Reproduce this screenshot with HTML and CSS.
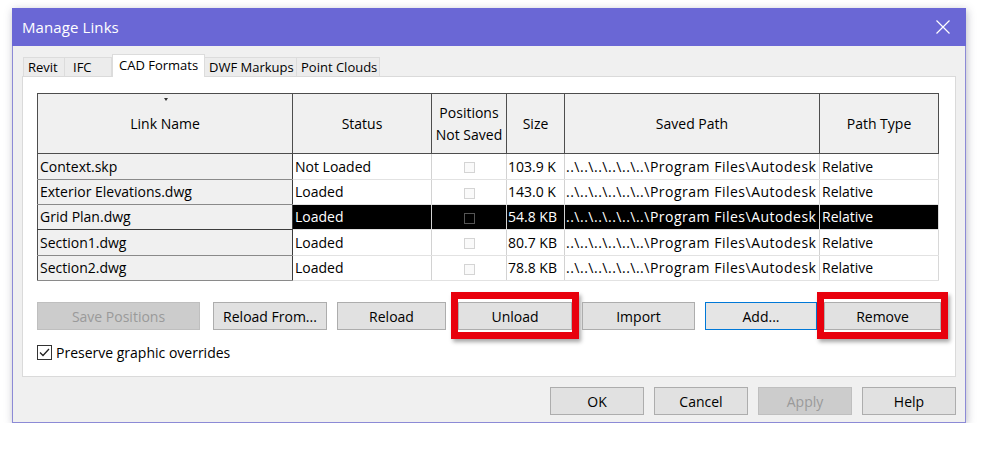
FILE: index.html
```html
<!DOCTYPE html>
<html>
<head>
<meta charset="utf-8">
<title>Manage Links</title>
<link rel="stylesheet" href="styles.css">
</head>
<body>
<div class="window">
  <div class="titlebar">
    <span class="title">Manage Links</span>
    <span class="close">
      <svg width="14" height="14" viewBox="0 0 14 14"><path d="M0.5 0.5 L13.5 13.5 M13.5 0.5 L0.5 13.5" stroke="#fff" stroke-width="1.2" fill="none"/></svg>
    </span>
  </div>
  <div class="content">
    <div class="tabs">
      <div class="tab tab-revit">Revit</div>
      <div class="tab tab-ifc">IFC</div>
      <div class="tab tab-active">CAD Formats</div>
      <div class="tab tab-dwf">DWF Markups</div>
      <div class="tab tab-pc">Point Clouds</div>
    </div>
    <div class="panel">
      <table class="grid">
        <colgroup>
          <col class="c-name"><col class="c-status"><col class="c-pos"><col class="c-size"><col class="c-path"><col class="c-type">
        </colgroup>
        <thead>
          <tr>
            <th class="h-name"><span class="sort"></span>Link Name</th>
            <th>Status</th>
            <th>Positions<br>Not Saved</th>
            <th>Size</th>
            <th>Saved Path</th>
            <th>Path Type</th>
          </tr>
        </thead>
        <tbody>
          <tr class="r1">
            <td class="name">Context.skp</td><td>Not Loaded</td><td class="pos"><span class="cb"></span></td><td class="size">103.9 K</td><td class="path">..\..\..\..\..\..\Program Files\Autodesk</td><td class="type">Relative</td>
          </tr>
          <tr class="r2">
            <td class="name">Exterior Elevations.dwg</td><td>Loaded</td><td class="pos"><span class="cb"></span></td><td class="size">143.0 K</td><td class="path">..\..\..\..\..\..\Program Files\Autodesk</td><td class="type">Relative</td>
          </tr>
          <tr class="r3 selected">
            <td class="name">Grid Plan.dwg</td><td>Loaded</td><td class="pos"><span class="cb"></span></td><td class="size">54.8 KB</td><td class="path">..\..\..\..\..\..\Program Files\Autodesk</td><td class="type">Relative</td>
          </tr>
          <tr class="r4">
            <td class="name">Section1.dwg</td><td>Loaded</td><td class="pos"><span class="cb"></span></td><td class="size">80.7 KB</td><td class="path">..\..\..\..\..\..\Program Files\Autodesk</td><td class="type">Relative</td>
          </tr>
          <tr class="r5">
            <td class="name">Section2.dwg</td><td>Loaded</td><td class="pos"><span class="cb"></span></td><td class="size">78.8 KB</td><td class="path">..\..\..\..\..\..\Program Files\Autodesk</td><td class="type">Relative</td>
          </tr>
        </tbody>
      </table>
      <div class="actions">
        <button class="btn disabled b-save">Save Positions</button>
        <button class="btn b-rf">Reload From...</button>
        <button class="btn b-reload">Reload</button>
        <button class="btn marked b-unload">Unload</button>
        <button class="btn b-import">Import</button>
        <button class="btn focused b-add">Add...</button>
        <button class="btn marked b-remove">Remove</button>
      </div>
      <label class="check">
        <span class="checkbox">
          <svg width="13" height="13" viewBox="0 0 13 13"><path d="M2 6.5 L5 9.5 L11 3" stroke="#222" stroke-width="1.3" fill="none"/></svg>
        </span>
        <span>Preserve graphic overrides</span>
      </label>
    </div>
    <div class="footer">
      <button class="btn fbtn">OK</button>
      <button class="btn fbtn">Cancel</button>
      <button class="btn fbtn disabled">Apply</button>
      <button class="btn fbtn">Help</button>
    </div>
  </div>
</div>
</body>
</html>
```
FILE: styles.css
```css
html, body {
  margin: 0;
  padding: 0;
  background: #ffffff;
}
body {
  font-family: "Open Sans", "Noto Sans", "DejaVu Sans", sans-serif;
  font-size: 14px;
  color: #000;
  padding-top: 8px;
}
.window {
  margin-left: 12px;
  width: 954px;
  box-sizing: border-box;
  border: 1px solid #8c8ad6;
  border-top: none;
  background: #f0f0f0;
  box-shadow: 1px 2px 8px rgba(60, 60, 90, 0.35);
}
.titlebar {
  height: 38px;
  background: #6a67d5;
  color: #fff;
  display: flex;
  align-items: center;
  justify-content: space-between;
  padding-left: 10px;
  margin: 0 -1px;
}
.title {
  font-size: 15px;
  letter-spacing: 0.1px;
}
.close {
  width: 46px;
  height: 38px;
  display: flex;
  align-items: center;
  justify-content: center;
}
.content {
  padding: 9px 9px 7px 9px;
}
.tabs {
  display: flex;
  align-items: flex-end;
  height: 21px;
  padding-left: 1px;
  position: relative;
  z-index: 1;
}
.tab {
  height: 19px;
  line-height: 18px;
  box-sizing: border-box;
  background: #ececec;
  border: 1px solid #dcdcdc;
  border-bottom: none;
  padding: 0 4px;
  font-size: 13px;
  white-space: nowrap;
}
.tab-revit { width: 42px; }
.tab-ifc { width: 47px; padding-left: 8px; border-left: none; }
.tab-active {
  width: 93px;
  line-height: 20px;
  background: #fff;
  padding-left: 6px;
  margin-bottom: -1px;
  height: 23px;
}
.tab-dwf { width: 92px; border-left: none; }
.tab-pc { width: 83px; border-left: none; }
.panel {
  height: 301px;
  box-sizing: border-box;
  background: #fff;
  border: 1px solid #dadada;
  padding: 16px 0 0 14px;
}
.grid {
  width: 901px;
  table-layout: fixed;
  border-collapse: collapse;
  font-size: 14px;
}
.c-name { width: 255px; }
.c-status { width: 139px; }
.c-pos { width: 75px; }
.c-size { width: 58px; }
.c-path { width: 255px; }
.c-type { width: 119px; }
.grid th {
  height: 59px;
  background: #f0f0f0;
  border: 1px solid #4d4d4d;
  font-weight: normal;
  line-height: 22px;
  padding: 0 1px;
  text-align: center;
  vertical-align: middle;
}
.h-name {
  position: relative;
}
.sort {
  position: absolute;
  left: 126px;
  top: 4px;
  width: 0;
  height: 0;
  border-left: 2.5px solid transparent;
  border-right: 2.5px solid transparent;
  border-top: 3px solid #333;
}
.grid td {
  height: 24px;
  padding: 0 0 0 2px;
  white-space: nowrap;
  overflow: hidden;
  border-right: 1px solid #d2d2d2;
  border-bottom: 1px solid #e2e2e2;
  line-height: 24px;
}
.grid tr.r1 td, .grid tr.r4 td { height: 25px; }
.grid td.name {
  background: #f0f0f0;
  border: 1px solid #8a8a8a;
  border-right: 1px solid #3c3c3c;
  border-left: 1px solid #4d4d4d;
}
.grid td.pos { text-align: center; padding: 0; }
.grid td.size { border-left: 1px solid #b4b4b4; padding-left: 1px; }
.grid td.path { padding-left: 1px; letter-spacing: 0.5px; }
.grid td.type { border-left: 1px solid #8a8a8a; padding-left: 2px; border-right: 1px solid #d8d8d8; }
.cb {
  display: inline-block;
  width: 9px;
  height: 9px;
  border: 1px solid #d4d4d4;
  background: #fafafa;
  vertical-align: middle;
}
.grid tr.selected td {
  background: #000;
  color: #fff;
}
.grid tr.selected td.name {
  background: #f0f0f0;
  color: #000;
  border-top: 1px solid #3c3c3c;
  border-bottom: 1px solid #3c3c3c;
}
.grid tr.selected .cb {
  background: #000;
  border-color: #555;
}
.actions {
  display: flex;
  gap: 10px;
  margin-top: 21px;
}
.btn {
  font-family: "Open Sans", "Noto Sans", "DejaVu Sans", sans-serif;
  font-size: 14px;
  height: 28px;
  box-sizing: border-box;
  background: #e1e1e1;
  border: 1px solid #adadad;
  color: #000;
  padding: 0;
  margin: 0;
  position: relative;
}
.btn.disabled {
  background: #cccccc;
  border-color: #bfbfbf;
  color: #9a9a9a;
}
.btn.focused {
  border-color: #0078d7;
  background: #e5e5e5;
}
.b-save { width: 163px; }
.b-rf { width: 114px; margin-left: 3px; }
.b-reload { width: 109px; }
.b-unload { width: 114px; margin-left: 2px; }
.b-import { width: 113px; }
.b-add { width: 112px; }
.b-remove { width: 117px; margin-left: -3px; }
.marked::after {
  content: "";
  position: absolute;
  left: -8px;
  right: -8px;
  top: -11px;
  bottom: -10px;
  border: 7px solid #e8000d;
  box-shadow: 2px 3px 4px rgba(0, 0, 0, 0.35);
  pointer-events: none;
}
.check {
  display: flex;
  align-items: center;
  gap: 4px;
  margin-top: 14px;
  height: 17px;
  font-size: 14px;
}
.checkbox {
  width: 13px;
  height: 13px;
  border: 1px solid #333;
  background: #fff;
  display: flex;
}
.footer {
  display: flex;
  justify-content: flex-end;
  gap: 10px;
  padding-top: 10px;
}
.fbtn { width: 94px; }
```
